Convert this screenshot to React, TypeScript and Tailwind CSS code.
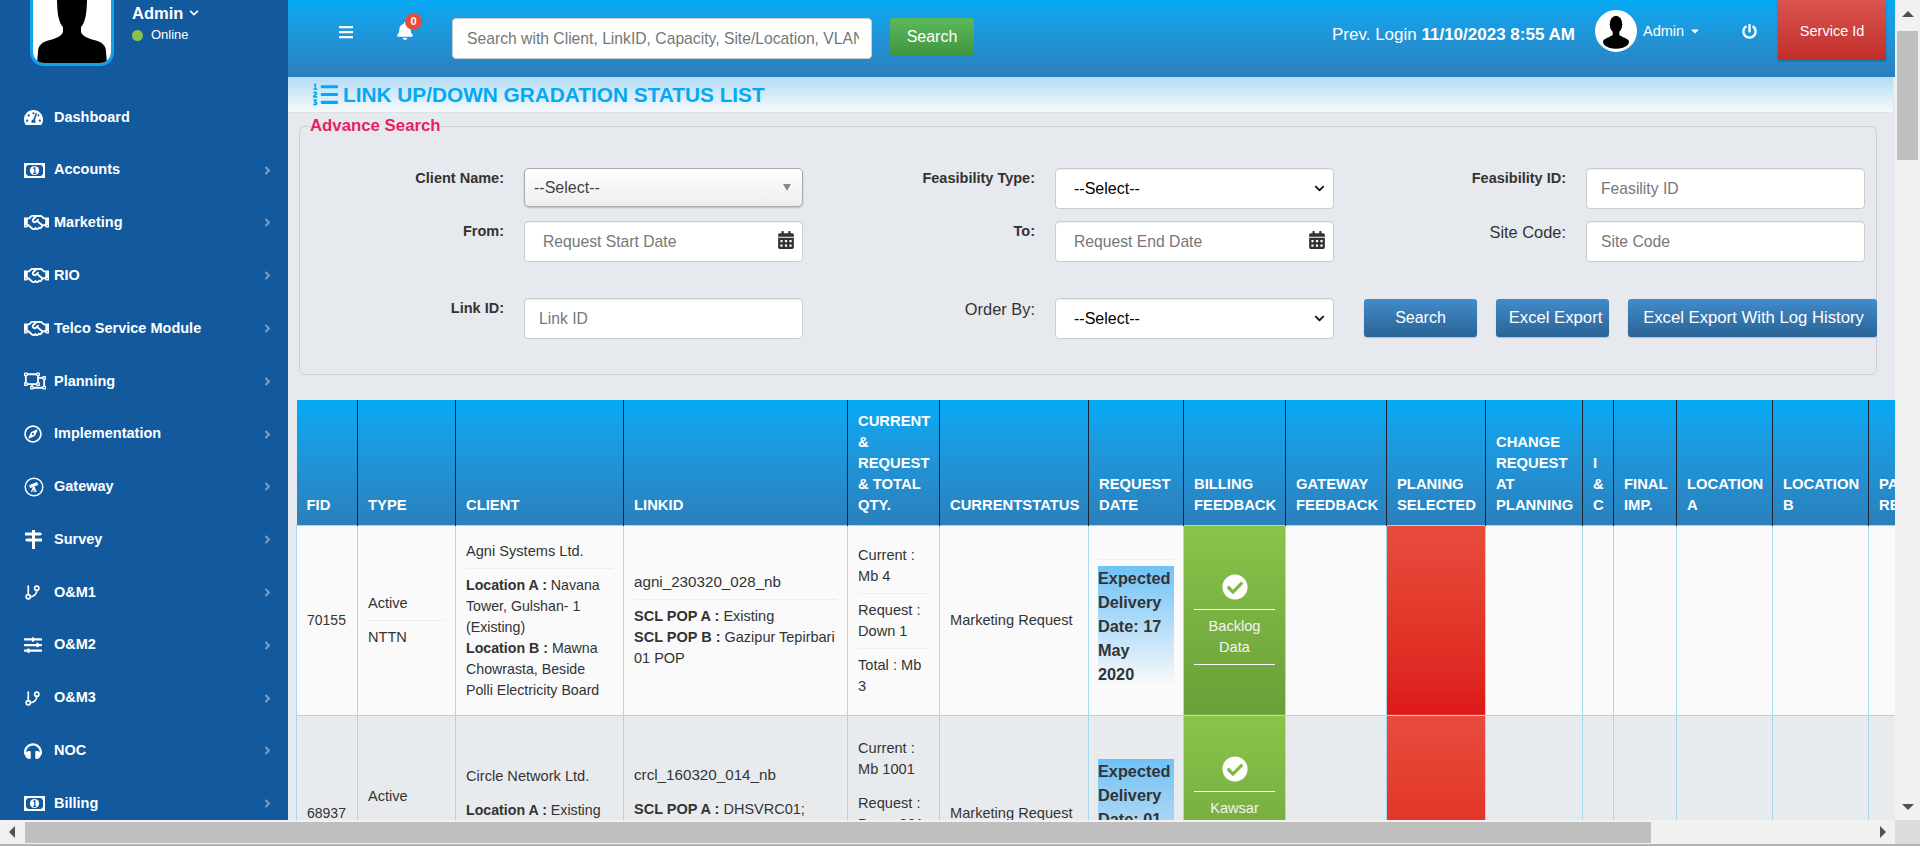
import React from "react";
import {
  FaAngleRight, FaBars, FaBell, FaCalendarAlt, FaCheckCircle, FaChevronDown, FaHeadphones, FaListOl,
  FaPowerOff, FaRegCompass, FaRegHandshake, FaRegObjectUngroup, FaSlidersH, FaTachometerAlt, FaCaretDown,
} from "react-icons/fa";
import { GitBranch } from "lucide-react";

const Money = () => (
  <svg width="21" height="15" viewBox="0 0 21 15">
    <rect width="21" height="15" fill="#fff" />
    <path d="M4 2h13l2 2v7l-2 2H4l-2-2V4z" fill="#12599e" />
    <circle cx="10.5" cy="7.5" r="4.6" fill="#fff" />
    <path d="M9.3 5.6l1.5-1v5.8M9.2 10.4h3" stroke="#12599e" strokeWidth="1.2" fill="none" />
  </svg>
);

const Telescope = () => (
  <svg width="20" height="20" viewBox="0 0 20 20" fill="none">
    <circle cx="10" cy="10" r="8.8" stroke="#fff" strokeWidth="1.5" />
    <path d="M5 8.2l8-3.2 1.2 3-8 3.2z" fill="#fff" />
    <path d="M9.5 10l-2 5M10 10l2.2 5M10 10v5" stroke="#fff" strokeWidth="1.1" />
  </svg>
);

const Signs = () => (
  <svg width="19" height="19" viewBox="0 0 19 19" fill="#fff">
    <rect x="8" y="0" width="3" height="19" />
    <path d="M1 2.5h15.5l1.5 1.5-1.5 1.5H1z" />
    <path d="M18 8.5H2.5L1 10l1.5 1.5H18z" />
  </svg>
);

const AvatarBox = () => (
  <svg viewBox="0 0 78 63" className="block w-full h-full">
    <rect width="78" height="63" fill="#fff" />
    <path d="M24-2C24 10 25 22 30 27L30 31C30 35 25 38 17 40C9 42 5 45 5 52L4 63L74 63L73 52C73 45 69 42 61 40C53 38 48 35 48 31L48 27C53 22 54 10 54-2Z" fill="#000" />
  </svg>
);

const AvatarRound = () => (
  <svg viewBox="0 0 40 40" className="block w-full h-full">
    <circle cx="20" cy="20" r="20" fill="#fff" />
    <ellipse cx="20" cy="13" rx="6.6" ry="9" fill="#000" />
    <path d="M16.5 20L16.5 24C15 26 10 27 7 29.5C6 30.5 6 33 8 35C14 40 26 40 32 35C34 33 34 30.5 33 29.5C30 27 25 26 23.5 24L23.5 20Z" fill="#000" />
  </svg>
);

const menu: [string, React.ReactNode, boolean][] = [
  ["Dashboard", <FaTachometerAlt size={19} />, false],
  ["Accounts", <Money />, true],
  ["Marketing", <FaRegHandshake size={25} />, true],
  ["RIO", <FaRegHandshake size={25} />, true],
  ["Telco Service Module", <FaRegHandshake size={25} />, true],
  ["Planning", <FaRegObjectUngroup size={22} />, true],
  ["Implementation", <FaRegCompass size={18} />, true],
  ["Gateway", <Telescope />, true],
  ["Survey", <Signs />, true],
  ["O&M1", <GitBranch size={17} strokeWidth={2.4} />, true],
  ["O&M2", <FaSlidersH size={18} />, true],
  ["O&M3", <GitBranch size={17} strokeWidth={2.4} />, true],
  ["NOC", <FaHeadphones size={18} />, true],
  ["Billing", <Money />, true],
];

const Sidebar = () => (
  <aside className="w-[288px] shrink-0 bg-[#12599e] text-white overflow-hidden">
    <div className="h-[91px] flex items-start pl-[30px]">
      <div className="w-[84px] h-[66px] border-[3px] border-t-0 border-[#0da4ee] rounded-b-[14px] overflow-hidden shrink-0">
        <AvatarBox />
      </div>
      <div className="ml-[18px]">
        <div className="flex items-center h-[26px] text-[16.5px] font-bold">
          Admin <FaChevronDown className="ml-[6px]" size={10} />
        </div>
        <div className="flex items-center h-[16px] mt-[1px] text-[13px]">
          <span className="w-[11px] h-[11px] rounded-full bg-[#8bc34a] mr-[8px]" />
          Online
        </div>
      </div>
    </div>
    {menu.map(([label, icon, arrow]) => (
      <div key={label} className="h-[52.8px] flex items-center pl-[24px] pr-[14px]">
        <span className="w-[30px] shrink-0 flex items-center">{icon}</span>
        <span className="text-[14.5px] font-bold flex-1 whitespace-nowrap">{label}</span>
        {arrow && <FaAngleRight size={13} className="text-[#7f9cbd]" />}
      </div>
    ))}
  </aside>
);

const Header = () => (
  <header className="h-[77px] shrink-0 flex items-start bg-gradient-to-b from-[#03a9f4] to-[#2a7fbb] text-white">
    <FaBars size={16} className="ml-[50px] mt-[24px]" />
    <div className="relative ml-[42px] mt-[22px] w-[18px] h-[18px]">
      <FaBell size={18} />
      <span className="absolute left-[9px] top-[-9px] w-[17px] h-[17px] rounded-full bg-[#e74c3c] text-[11px] font-bold flex items-center justify-center">0</span>
    </div>
    <input
      className="ml-[38px] mt-[18px] w-[420px] h-[41px] bg-white rounded-[4px] border border-[#ccc] pl-[14px] pr-[12px] text-[15.7px] text-[#555] placeholder:text-[#777] outline-none"
      placeholder="Search with Client, LinkID, Capacity, Site/Location, VLAN, IP"
    />
    <button className="ml-[18px] mt-[18px] w-[84px] h-[38px] rounded-[3px] bg-gradient-to-b from-[#5cb85c] to-[#419641] text-[16px]">Search</button>
    <div className="ml-[358px] mt-[24px] text-[17px] leading-[22px] whitespace-nowrap w-[263px]">
      Prev. Login <b>11/10/2023 8:55 AM</b>
    </div>
    <div className="mt-[10px] w-[42px] h-[42px] rounded-full border-2 border-white overflow-hidden shrink-0 bg-white">
      <AvatarRound />
    </div>
    <div className="ml-[6px] mt-[21px] flex items-center text-[14.5px] leading-[20px]">
      Admin <FaCaretDown size={12} className="ml-[5px]" />
    </div>
    <FaPowerOff size={15} className="ml-[41px] mt-[24px]" />
    <button className="ml-[21px] w-[108px] h-[60px] pt-[4px] bg-gradient-to-b from-[#d9534f] to-[#c12e2a] text-[14.5px] shadow-[0_1px_2px_rgba(0,0,0,0.25)]">Service Id</button>
  </header>
);

const inputCls =
  "w-full h-[41px] bg-white rounded-[4px] border border-[#ccc] shadow-[inset_0_1px_1px_rgba(0,0,0,0.075)] text-[15.7px] outline-none placeholder:text-[#777]";
const selectCls =
  "appearance-none w-full h-[41px] bg-white rounded-[4px] border border-[#ccc] shadow-[inset_0_1px_1px_rgba(0,0,0,0.075)] text-[16px] text-black pl-[18px] outline-none";
const labelB = "text-right pr-5 text-[14.5px] font-bold leading-[21px] text-[#333]";
const labelR = "text-right pr-5 text-[16.4px] leading-[22px] text-[#333]";
const blueBtn = "h-[38px] mt-[1px] shrink-0 rounded-[3px] bg-gradient-to-b from-[#428bca] to-[#2a6496] text-white shadow-[0_1px_1px_rgba(0,0,0,0.2)]";

const DateInput = ({ ph }: { ph: string }) => (
  <div className="relative">
    <input className={`${inputCls} pl-[18px] pr-[30px]`} placeholder={ph} />
    <FaCalendarAlt size={18} className="absolute right-[8px] top-[10px] text-[#333]" />
  </div>
);

const Sel = () => (
  <div className="relative">
    <select className={selectCls}><option>--Select--</option></select>
    <FaChevronDown size={11} className="absolute right-[9px] top-[15px] text-[#111] pointer-events-none" />
  </div>
);

const SearchForm = () => (
  <fieldset className="ml-[11px] mt-[1px] w-[1578px] h-[261px] border border-[#ccd0d4] rounded-[6px] shrink-0 min-w-0">
    <legend className="ml-[10px] h-[24px] text-[16.8px] leading-[24px] text-[#e91e63] font-bold whitespace-nowrap">Advance Search</legend>
    <div className="mt-[30px] grid grid-cols-[224px_279px_252px_279px_252px_279px] grid-rows-[53px_77px_41px]">
      <div className={labelB}>Client Name:</div>
      <div className="h-[39px] rounded-[5px] border border-[#aaa] bg-gradient-to-b from-white via-[#f6f6f6] to-[#eee] shadow-[0_1px_2px_rgba(0,0,0,0.2)] flex items-center justify-between pl-[9px] pr-[11px] text-[16px] text-[#444]">
        --Select--
        <span className="w-0 h-0 border-x-[4px] border-x-transparent border-t-[7px] border-t-[#888]" />
      </div>
      <div className={labelB}>Feasibility Type:</div>
      <Sel />
      <div className={labelB}>Feasibility ID:</div>
      <input className={`${inputCls} pl-[14px]`} placeholder="Feasility ID" />

      <div className={labelB}>From:</div>
      <DateInput ph="Request Start Date" />
      <div className={labelB}>To:</div>
      <DateInput ph="Request End Date" />
      <div className={labelR}>Site Code:</div>
      <input className={`${inputCls} pl-[14px]`} placeholder="Site Code" />

      <div className={labelB}>Link ID:</div>
      <input className={`${inputCls} pl-[14px]`} placeholder="Link ID" />
      <div className={labelR}>Order By:</div>
      <Sel />
      <div className="col-span-2 pl-[30px] flex gap-[19px] w-[560px]">
        <button className={`${blueBtn} w-[113px] text-[16px]`}>Search</button>
        <button className={`${blueBtn} w-[113px] text-[16.7px] pl-[6px] whitespace-nowrap`}>Excel Export</button>
        <button className={`${blueBtn} w-[249px] text-[16.7px] pl-[2px] whitespace-nowrap`}>Excel Export With Log History</button>
      </div>
    </div>
  </fieldset>
);

const columns: [number, string[]][] = [
  [61, ["FID"]],
  [98, ["TYPE"]],
  [168, ["CLIENT"]],
  [224, ["LINKID"]],
  [92, ["CURRENT", "&", "REQUEST", "& TOTAL", "QTY."]],
  [149, ["CURRENTSTATUS"]],
  [95, ["REQUEST", "DATE"]],
  [102, ["BILLING", "FEEDBACK"]],
  [101, ["GATEWAY", "FEEDBACK"]],
  [99, ["PLANING", "SELECTED"]],
  [97, ["CHANGE", "REQUEST", "AT", "PLANNING"]],
  [31, ["I", "&", "C"]],
  [63, ["FINAL", "IMP."]],
  [96, ["LOCATION", "A"]],
  [96, ["LOCATION", "B"]],
  [120, ["PARTIAL", "REQUEST"]],
];

const td = "border border-[#a6d8f0] px-[10px] align-middle text-[14.6px] leading-[21px] text-[#333]";
const Li = ({ children }: { children: React.ReactNode }) => (
  <div className="pb-[6px] mb-[6px] border-b border-[#eee]">{children}</div>
);
const Green = ({ lines }: { lines: string[] }) => (
  <td className="border border-[#a6d8f0] px-[10px] align-middle text-center text-[14.6px] leading-[21px] text-[#f4f4f4] bg-gradient-to-b from-[#8bc34a] to-[#689f38]">
    <FaCheckCircle size={26} className="mx-auto mb-[9px] text-white" />
    <div className="border-y border-white py-[6px] mb-[2px]">
      {lines.map((l) => <div key={l}>{l}</div>)}
    </div>
  </td>
);
const Red = () => <td className="border border-[#a6d8f0] bg-gradient-to-b from-[#e74c3c] to-[#dd1818]" />;
const Empty = ({ n }: { n: number }) => (
  <>
    {Array.from({ length: n }).map((_, i) => <td key={i} className={td} />)}
  </>
);
const Expected = ({ lines }: { lines: string[] }) => (
  <td className="border border-[#a6d8f0] px-[9px] align-middle text-[#333]">
    <div className="border-b border-[#eee] mb-[6px]" />
    <div className="mb-[-5px] bg-gradient-to-b from-[#6ec1f7] to-transparent text-[16.3px] font-bold leading-[24px] whitespace-nowrap">
      {lines.map((l) => <div key={l}>{l}</div>)}
    </div>
  </td>
);

const DataTable = () => (
  <table className="ml-[8px] mt-[25px] table-fixed border-collapse w-[1692px] shrink-0">
    <colgroup>
      {columns.map(([w], i) => <col key={i} span={1} style={{ width: w }} />)}
    </colgroup>
    <thead>
      <tr className="h-[125px]">
        {columns.map(([, ls], i) => (
          <th key={i} className="bg-gradient-to-b from-[#03a9f4] to-[#2a7fbb] border-r border-[#1c2530] px-[10px] pb-[9px] align-bottom text-left text-white text-[14.8px] font-bold leading-[21px]">
            {ls.map((l) => <div key={l} className="whitespace-nowrap">{l}</div>)}
          </th>
        ))}
      </tr>
    </thead>
    <tbody>
      <tr className="h-[190px] bg-[#fafafa]">
        <td className={`${td} text-[14px]`}>70155</td>
        <td className={td}><Li>Active</Li><div>NTTN</div></td>
        <td className={`${td} pt-[2px]`}>
          <Li>Agni Systems Ltd.</Li>
          <div className="text-[14.2px]"><b>Location A :</b> Navana Tower, Gulshan- 1 (Existing)<br /><b>Location B :</b> Mawna Chowrasta, Beside Polli Electricity Board</div>
        </td>
        <td className={td}>
          <Li><span className="text-[15.2px]">agni_230320_028_nb</span></Li>
          <div className="text-[14.5px]"><b>SCL POP A :</b> Existing<br /><b>SCL POP B :</b> Gazipur Tepirbari 01 POP</div>
        </td>
        <td className={`${td} pt-[2px]`}><Li>Current : Mb 4</Li><Li>Request : Down 1</Li><div>Total : Mb 3</div></td>
        <td className={td}>Marketing Request</td>
        <Expected lines={["Expected", "Delivery", "Date: 17", "May", "2020"]} />
        <Green lines={["Backlog", "Data"]} />
        <td className={td} />
        <Red />
        <Empty n={6} />
      </tr>
      <tr className="h-[196px] bg-[#e8ebee]">
        <td className={`${td} text-[14px]`}>68937</td>
        <td className={td}><Li>Active</Li><div>NTTN</div></td>
        <td className={`${td} pt-[2px]`}>
          <Li>Circle Network Ltd.</Li>
          <div className="text-[14.2px]"><b>Location A :</b> Existing<br /><b>Location B :</b> Dhaka<br />(Existing)</div>
        </td>
        <td className={td}>
          <Li><span className="text-[15.2px]">crcl_160320_014_nb</span></Li>
          <div className="text-[14.5px]"><b>SCL POP A :</b> DHSVRC01;<br /><b>SCL POP B :</b> Existing<br />POP</div>
        </td>
        <td className={`${td} pt-[2px]`}><Li>Current : Mb 1001</Li><Li>Request : Down 901</Li><div>Total : Mb 100</div></td>
        <td className={td}>Marketing Request</td>
        <Expected lines={["Expected", "Delivery", "Date: 01", "April", "2020"]} />
        <Green lines={["Kawsar", "Ahmed", "Data"]} />
        <td className={td} />
        <Red />
        <Empty n={6} />
      </tr>
    </tbody>
  </table>
);

export default function App() {
  return (
    <div className="w-[1920px] h-[846px] overflow-hidden flex flex-col bg-[#e6e9ed] font-['Liberation_Sans',Arial,sans-serif]">
      <div className="flex h-[820px] shrink-0">
        <Sidebar />
        <main className="w-[1607px] shrink-0 flex flex-col overflow-hidden">
          <Header />
          <div className="h-[36px] shrink-0 mr-[2px] pl-[25px] flex items-center bg-gradient-to-b from-[#b3dcf5] to-[#f6f9fb] border-b border-[#e0e3e6] text-[#03a9f4]">
            <FaListOl size={25} className="mr-[5px]" />
            <span className="text-[20.8px] font-bold whitespace-nowrap">LINK UP/DOWN GRADATION STATUS LIST</span>
          </div>
          <SearchForm />
          <DataTable />
        </main>
        <div className="w-[25px] shrink-0 bg-[#f1f1f1] flex flex-col items-center">
          <span className="mt-[11px] w-0 h-0 border-x-[6px] border-x-transparent border-b-[6px] border-b-[#505050]" />
          <div className="mt-[14px] w-[21px] h-[129px] bg-[#bfbfbf]" />
          <div className="flex-1" />
          <span className="mb-[10px] w-0 h-0 border-x-[6px] border-x-transparent border-t-[6px] border-t-[#505050]" />
        </div>
      </div>
      <div className="h-[24px] shrink-0 flex bg-[#f1f1f1]">
        <div className="w-[1895px] flex items-center shrink-0">
          <span className="ml-[9px] w-0 h-0 border-y-[6px] border-y-transparent border-r-[6px] border-r-[#505050]" />
          <div className="ml-[10px] w-[1626px] h-[21px] bg-[#bfbfbf]" />
          <div className="flex-1" />
          <span className="mr-[9px] w-0 h-0 border-y-[6px] border-y-transparent border-l-[6px] border-l-[#505050]" />
        </div>
        <div className="flex-1 bg-[#dcdcdc]" />
      </div>
      <div className="h-[2px] shrink-0 bg-[#a9b9b5]" />
    </div>
  );
}
